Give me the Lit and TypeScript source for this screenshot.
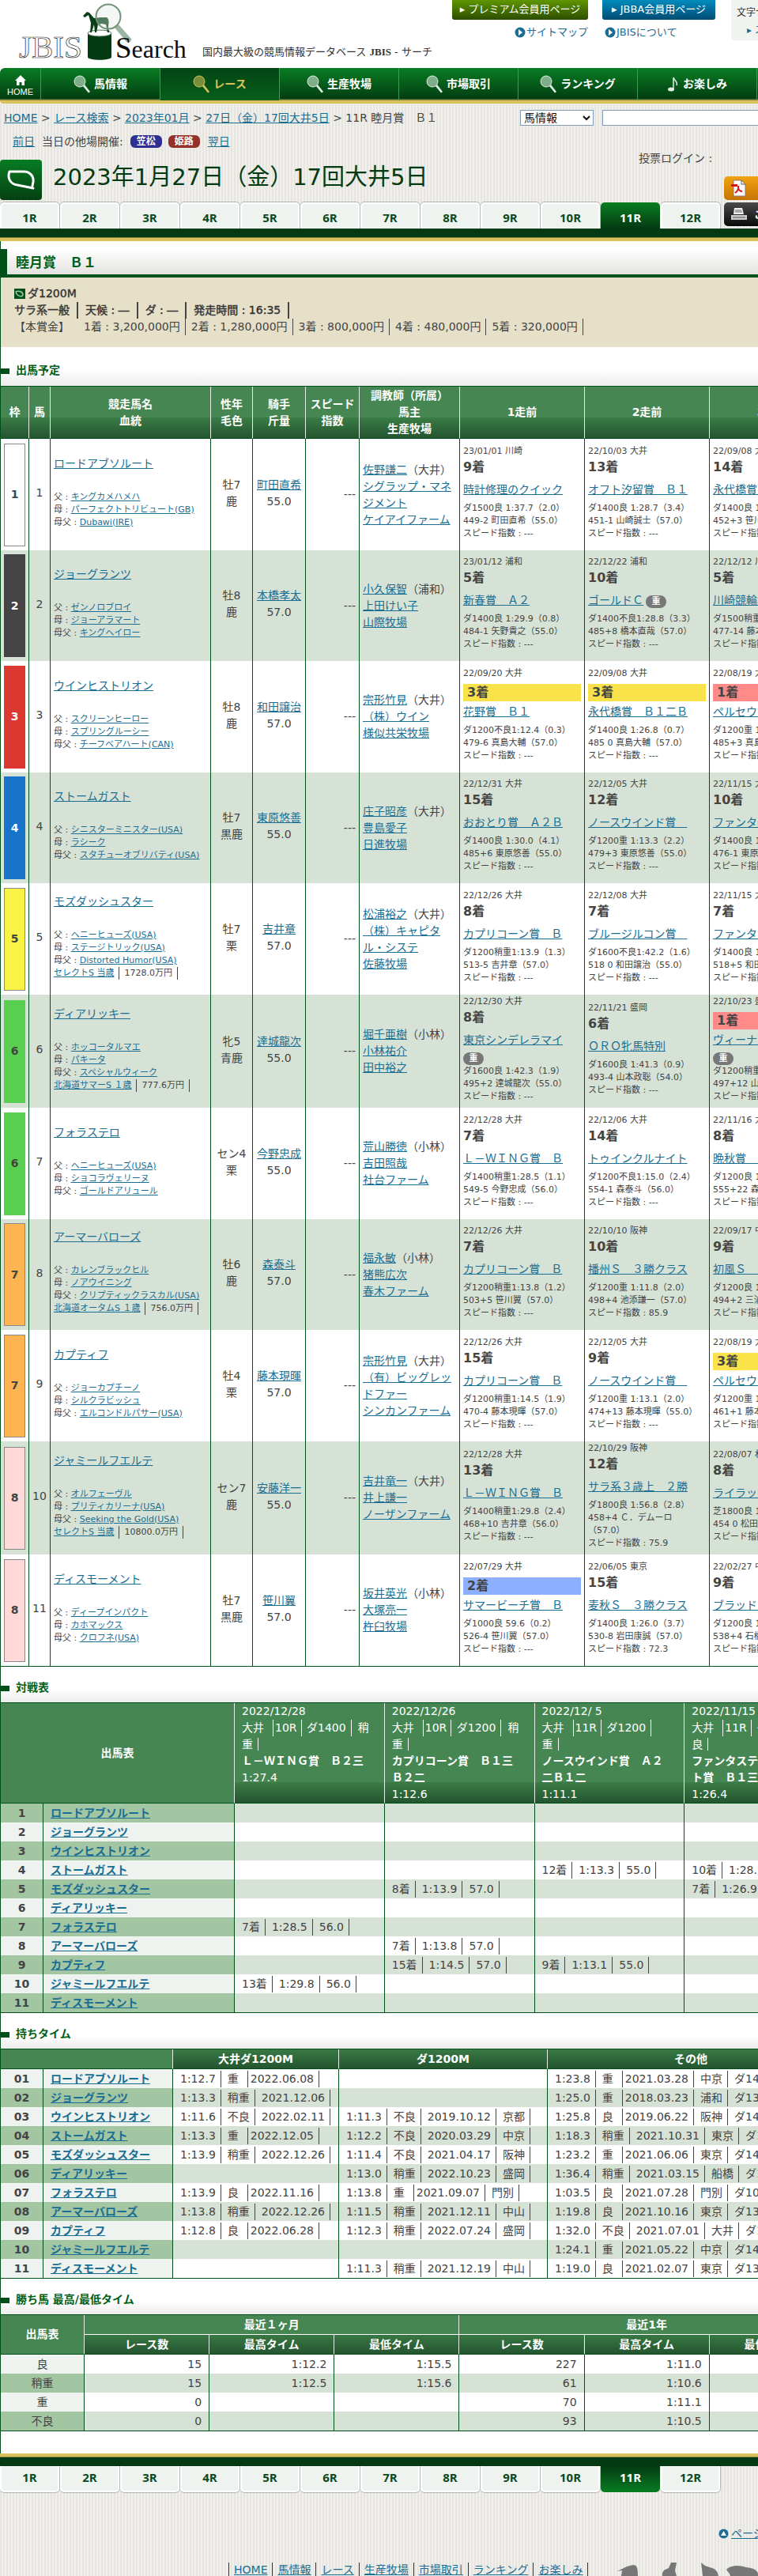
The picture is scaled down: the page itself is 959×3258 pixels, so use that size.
import { LitElement, html, css, svg, nothing } from "lit";
import { customElement, property } from "lit/decorators.js";
import { classMap } from "lit/directives/class-map.js";

type Run = { d: string; r: string; n: string; l: string[]; heavy?: "inline" | "below" };
type Horse = {
  w: number; name: string; sire: string; dam: string; bms: string; sale?: [string, string];
  sex: string; coat: string; jockey: string; kg: string; trainer: string; area: string;
  owner: string; farm: string; runs: Run[];
};

const run = (d: string, r: string, n: string, a: string, b: string, s = "---", heavy?: "inline" | "below"): Run =>
  ({ d, r, n, l: [a, b, `スピード指数 : ${s}`], heavy });

const HORSES: Horse[] = [
  { w: 1, name: "ロードアブソルート", sire: "キングカメハメハ", dam: "パーフェクトトリビュート(GB)", bms: "Dubawi(IRE)", sex: "牡7", coat: "鹿", jockey: "町田直希", kg: "55.0", trainer: "佐野謙二", area: "大井", owner: "シグラップ・マネジメント", farm: "ケイアイファーム",
    runs: [run("23/01/01 川崎", "9", "時計修理のクイック", "ダ1500良 1:37.7（2.0）", "449-2 町田直希（55.0）"), run("22/10/03 大井", "13", "オフト汐留賞　Ｂ１", "ダ1400良 1:28.7（3.4）", "451-1 山崎誠士（57.0）"), run("22/09/08 大井", "14", "永代橋賞　Ｂ１二Ｂ", "ダ1400良 1:28.9（2.8）", "452+3 笹川翼（57.0）")] },
  { w: 2, name: "ジョーグランツ", sire: "ゼンノロブロイ", dam: "ジョーアラマート", bms: "キングヘイロー", sex: "牡8", coat: "鹿", jockey: "本橋孝太", kg: "57.0", trainer: "小久保智", area: "浦和", owner: "上田けい子", farm: "山際牧場",
    runs: [run("23/01/12 浦和", "5", "新春賞　Ａ２", "ダ1400良 1:29.9（0.8）", "484-1 矢野貴之（55.0）"), run("22/12/22 浦和", "10", "ゴールドＣ", "ダ1400不良1:28.8（3.3）", "485+8 橋本直哉（57.0）", "---", "inline"), run("22/12/12 川崎", "5", "川崎競輪場賞", "ダ1500稍重1:37.0（1.2）", "477-14 藤本現暉（57.0）")] },
  { w: 3, name: "ウインヒストリオン", sire: "スクリーンヒーロー", dam: "スプリングルーシー", bms: "チーフベアハート(CAN)", sex: "牡8", coat: "鹿", jockey: "和田譲治", kg: "57.0", trainer: "宗形竹見", area: "大井", owner: "（株）ウイン", farm: "様似共栄牧場",
    runs: [run("22/09/20 大井", "3", "花野賞　Ｂ１", "ダ1200不良1:12.4（0.3）", "479-6 真島大輔（57.0）"), run("22/09/08 大井", "3", "永代橋賞　Ｂ１二Ｂ", "ダ1400良 1:26.8（0.7）", "485 0 真島大輔（57.0）"), run("22/08/19 大井", "1", "ペルセウス賞　Ｂ１", "ダ1200重 1:12.2（0.1）", "485+3 真島大輔（57.0）")] },
  { w: 4, name: "ストームガスト", sire: "シニスターミニスター(USA)", dam: "ラシーク", bms: "スタチューオブリバティ(USA)", sex: "牡7", coat: "黒鹿", jockey: "東原悠善", kg: "55.0", trainer: "庄子昭彦", area: "大井", owner: "豊島愛子", farm: "日進牧場",
    runs: [run("22/12/31 大井", "15", "おおとり賞　Ａ２Ｂ", "ダ1400良 1:30.0（4.1）", "485+6 東原悠善（55.0）"), run("22/12/05 大井", "12", "ノースウインド賞　", "ダ1200重 1:13.3（2.2）", "479+3 東原悠善（55.0）"), run("22/11/15 大井", "10", "ファンタスティック", "ダ1400良 1:28.1（1.7）", "476-1 東原悠善（55.0）")] },
  { w: 5, name: "モズダッシュスター", sire: "ヘニーヒューズ(USA)", dam: "ステージトリック(USA)", bms: "Distorted Humor(USA)", sale: ["セレクトS 当歳", "1728.0万円"], sex: "牡7", coat: "栗", jockey: "吉井章", kg: "57.0", trainer: "松浦裕之", area: "大井", owner: "（株）キャピタル・システ", farm: "佐藤牧場",
    runs: [run("22/12/26 大井", "8", "カプリコーン賞　Ｂ", "ダ1200稍重1:13.9（1.3）", "513-5 吉井章（57.0）"), run("22/12/08 大井", "7", "ブルージルコン賞　", "ダ1600不良1:42.2（1.6）", "518 0 和田譲治（55.0）"), run("22/11/15 大井", "7", "ファンタスティック", "ダ1400良 1:26.9（0.5）", "518+5 和田譲治（55.0）")] },
  { w: 6, name: "ディアリッキー", sire: "ホッコータルマエ", dam: "パキータ", bms: "スペシャルウィーク", sale: ["北海道サマーS １歳", "777.6万円"], sex: "牝5", coat: "青鹿", jockey: "達城龍次", kg: "55.0", trainer: "堀千亜樹", area: "小林", owner: "小林祐介", farm: "田中裕之",
    runs: [run("22/12/30 大井", "8", "東京シンデレラマイ", "ダ1600良 1:42.3（1.9）", "495+2 達城龍次（55.0）", "---", "below"), run("22/11/21 盛岡", "6", "ＯＲＯ牝馬特別", "ダ1600良 1:41.3（0.9）", "493-4 山本政聡（54.0）"), run("22/10/23 盛岡", "1", "ヴィーナススプリン", "ダ1200稍重1:13.0（0.1）", "497+12 山本聡哉（55.0）", "---", "below")] },
  { w: 6, name: "フォラステロ", sire: "ヘニーヒューズ(USA)", dam: "ショコラヴェリーヌ", bms: "ゴールドアリュール", sex: "セン4", coat: "栗", jockey: "今野忠成", kg: "55.0", trainer: "荒山勝徳", area: "小林", owner: "吉田照哉", farm: "社台ファーム",
    runs: [run("22/12/28 大井", "7", "Ｌ－ＷＩＮＧ賞　Ｂ", "ダ1400稍重1:28.5（1.1）", "549-5 今野忠成（56.0）"), run("22/12/06 大井", "14", "トゥインクルナイト", "ダ1200不良1:15.0（2.4）", "554-1 森泰斗（56.0）"), run("22/11/16 大井", "8", "晩秋賞　Ｂ１", "ダ1200良 1:13.9（1.4）", "555+22 森泰斗（56.0）")] },
  { w: 7, name: "アーマーバローズ", sire: "カレンブラックヒル", dam: "ノアウイニング", bms: "クリプティックラスカル(USA)", sale: ["北海道オータムS １歳", "756.0万円"], sex: "牡6", coat: "鹿", jockey: "森泰斗", kg: "57.0", trainer: "福永敏", area: "小林", owner: "猪熊広次", farm: "春木ファーム",
    runs: [run("22/12/26 大井", "7", "カプリコーン賞　Ｂ", "ダ1200稍重1:13.8（1.2）", "503+5 笹川翼（57.0）"), run("22/10/10 阪神", "10", "播州Ｓ　３勝クラス", "ダ1200重 1:11.8（2.0）", "498+4 池添謙一（57.0）", "85.9"), run("22/09/17 中山", "9", "初風Ｓ　３勝クラス", "ダ1200良 1:12.1（0.9）", "494+2 三浦皇成（57.0）")] },
  { w: 7, name: "カプティフ", sire: "ジョーカプチーノ", dam: "シルクラビッシュ", bms: "エルコンドルパサー(USA)", sex: "牡4", coat: "栗", jockey: "藤本現暉", kg: "57.0", trainer: "宗形竹見", area: "大井", owner: "（有）ビッグレッドファー", farm: "シンカンファーム",
    runs: [run("22/12/26 大井", "15", "カプリコーン賞　Ｂ", "ダ1200稍重1:14.5（1.9）", "470-4 藤本現暉（57.0）"), run("22/12/05 大井", "9", "ノースウインド賞　", "ダ1200重 1:13.1（2.0）", "474+13 藤本現暉（55.0）"), run("22/08/19 大井", "3", "ペルセウス賞　Ｂ１", "ダ1200重 1:12.4（0.2）", "461+1 藤本現暉（55.0）")] },
  { w: 8, name: "ジャミールフエルテ", sire: "オルフェーヴル", dam: "プリティカリーナ(USA)", bms: "Seeking the Gold(USA)", sale: ["セレクトS 当歳", "10800.0万円"], sex: "セン7", coat: "鹿", jockey: "安藤洋一", kg: "55.0", trainer: "吉井竜一", area: "大井", owner: "井上謙一", farm: "ノーザンファーム",
    runs: [run("22/12/28 大井", "13", "Ｌ－ＷＩＮＧ賞　Ｂ", "ダ1400稍重1:29.8（2.4）", "468+10 吉井章（56.0）"), run("22/10/29 阪神", "12", "サラ系３歳上　２勝", "ダ1800良 1:56.8（2.8）", "458+4 Ｃ．デムーロ（57.0）", "75.9"), run("22/08/07 札幌", "8", "ライラック賞　２勝", "芝1800良 1:50.0（1.1）", "454 0 松田大作（57.0）")] },
  { w: 8, name: "ディスモーメント", sire: "ディープインパクト", dam: "カホマックス", bms: "クロフネ(USA)", sex: "牡7", coat: "黒鹿", jockey: "笹川翼", kg: "57.0", trainer: "坂井英光", area: "小林", owner: "大塚亮一", farm: "杵臼牧場",
    runs: [run("22/07/29 大井", "2", "サマービーチ賞　Ｂ", "ダ1000良 59.6（0.2）", "526-4 笹川翼（57.0）"), run("22/06/05 東京", "15", "麦秋Ｓ　３勝クラス", "ダ1400良 1:26.0（3.7）", "530-8 岩田康誠（57.0）", "72.3"), run("22/02/27 中山", "9", "ブラッドストーンＳ", "ダ1200良 1:12.0（0.9）", "538+4 石橋脩（57.0）")] },
];

const VERSUS: Record<string, string[]> = {
  "4-2": ["12着", "1:13.3", "55.0"], "4-3": ["10着", "1:28.1", "55.0"],
  "5-1": ["8着", "1:13.9", "57.0"], "5-3": ["7着", "1:26.9", "55.0"],
  "7-0": ["7着", "1:28.5", "56.0"], "8-1": ["7着", "1:13.8", "57.0"],
  "9-1": ["15着", "1:14.5", "57.0"], "9-2": ["9着", "1:13.1", "55.0"],
  "10-0": ["13着", "1:29.8", "56.0"],
};

const TIMES = [
  ["1:12.7 重 2022.06.08", "", "1:23.8 重 2021.03.28 中京 ダ1400"],
  ["1:13.3 稍重 2021.12.06", "", "1:25.0 重 2018.03.23 浦和 ダ1300"],
  ["1:11.6 不良 2022.02.11", "1:11.3 不良 2019.10.12 京都", "1:25.8 良 2019.06.22 阪神 ダ1400"],
  ["1:13.3 重 2022.12.05", "1:12.2 不良 2020.03.29 中京", "1:18.3 稍重 2021.10.31 東京 ダ1300"],
  ["1:13.9 稍重 2022.12.26", "1:11.4 不良 2021.04.17 阪神", "1:23.2 重 2021.06.06 東京 ダ1400"],
  ["", "1:13.0 稍重 2022.10.23 盛岡", "1:36.4 稍重 2021.03.15 船橋 ダ1500"],
  ["1:13.9 良 2022.11.16", "1:13.8 重 2021.09.07 門別", "1:03.5 良 2021.07.28 門別 ダ1000"],
  ["1:13.8 稍重 2022.12.26", "1:11.5 稍重 2021.12.11 中山", "1:19.8 良 2021.10.16 東京 ダ1300"],
  ["1:12.8 良 2022.06.28", "1:12.3 稍重 2022.07.24 盛岡", "1:32.0 不良 2021.07.01 大井 ダ1400"],
  ["", "", "1:24.1 重 2021.05.22 中京 ダ1400"],
  ["", "1:11.3 稍重 2021.12.19 中山", "1:19.0 良 2021.02.07 東京 ダ1300"],
];

const RECORDS = [
  ["良", "15", "1:12.2", "1:15.5", "227", "1:11.0", "1:15.9"],
  ["稍重", "15", "1:12.5", "1:15.6", "61", "1:10.6", "1:15.6"],
  ["重", "0", "", "", "70", "1:11.1", "1:15.4"],
  ["不良", "0", "", "", "93", "1:10.5", "1:15.3"],
];

const base = css`
  * { box-sizing: border-box; }
  a { color: #1a6e93; text-decoration: underline; }
  h1, h2, h3, p, ul { margin: 0; padding: 0; }
  ul { list-style: none; }
  .seps span { display: inline-block; line-height: 21px; padding-right: 6px; margin-right: 8px; border-right: 1px solid #444; }
  .seps .short { padding-right: 11px; margin-right: 3px; }
`;

const gridStyles = css`
  table { width: 100%; table-layout: fixed; border-collapse: separate; border-spacing: 0; border-top: 1px solid #00501a; border-bottom: 1px solid #00501a; }
  th { font-weight: 700; }
  thead th { color: #fff; background: #468653 linear-gradient(#3a7c46, #24552f) bottom / 100% 26px no-repeat; border-bottom: 1px solid #00501a; padding: 1px 4px; line-height: 21px; }
  thead th + th, thead .sub th { border-left: 1px solid #e4ede5; }
  thead .flat { background: #468653; }
  tbody td, tbody th { border-left: 1px solid #00501a; }
  tbody tr > :first-child { border-left: 0; }
`;

const seps = (parts: string[]) =>
  html`<span class="seps">${parts.map((p) => html`<span class=${p.length === 1 ? "short" : ""}>${p}</span>`)}</span>`;

const lens = svg`<circle cx="8" cy="8" r="7" fill="currentColor" fill-opacity=".55" stroke="currentColor" stroke-width="1"/><path d="M12 14l2-2 7 9-2 1.500z" fill="currentColor"/>`;

@customElement("site-header")
class SiteHeader extends LitElement {
  static styles = [base, css`
    :host { display: block; background: #fff; }
    .top { display: flex; height: 86px; }
    .logo { display: flex; flex: none; width: 250px; }
    .tag { flex: 1; align-self: flex-end; font-size: 13px; line-height: 20px; margin-bottom: 10px; padding-left: 6px; color: #333; white-space: nowrap; }
    .tag b { font-family: "Liberation Serif", serif; }
    .links { display: grid; grid-template-columns: 172px 143px; column-gap: 18px; align-content: start; justify-items: start; margin-right: 20px; }
    .links a { text-decoration: none; font-size: 13px; }
    .links .member { width: 100%; height: 25px; line-height: 23px; color: #fff; text-align: center; border-radius: 0 0 3px 3px; background: linear-gradient(#5f9600, #2c4d00); }
    .links .jbba { background: linear-gradient(#008bbd, #004c73); }
    .links .sub { display: flex; align-items: center; gap: 1px; line-height: 20px; margin-top: 6px; }
    .map { justify-self: end; }
    .jabout { margin-left: 3px; }
    .size { width: 130px; height: 51px; background: #f1f3f1; padding: 5px 7px; font-size: 12px; line-height: 22px; color: #333; border-radius: 0 0 0 4px; white-space: nowrap; }
    .size a { text-decoration: none; margin-left: 13px; }
    nav { display: flex; height: 45px; border-bottom: 4px solid #d9c25b; border-radius: 6px 0 0 4px; background: linear-gradient(#087d23, #043d12 39px, #8b8a3a 40px); overflow: hidden; }
    nav a { width: 151px; display: flex; align-items: center; justify-content: center; gap: 4px; color: #fff; font-size: 14px; font-weight: 700; text-decoration: none; border-right: 1px solid #3f9a52; }
    nav svg { color: #e3eee5; }
    nav .home { width: 52px; flex-direction: column; gap: 1px; font: 11px/12px "Liberation Sans", sans-serif; padding-top: 4px; }
    nav .on { color: #d9c25b; background: linear-gradient(#034414, #075f1c); }
    nav .on svg { color: #d9c25b; }
  `];
  render() {
    const tabs = ["馬情報", "レース", "生産牧場", "市場取引", "ランキング"];
    return html`
      <div class="top">
        <a class="logo" href="#" aria-label="JBIS Search">
          <svg width="250" height="86" viewBox="0 0 250 86">
            <text x="24" y="73" font-family="Liberation Serif" font-size="41" fill="#fff" stroke="#222" stroke-width=".7">JBIS</text>
            <path d="M111 42v30c0 5 30 5 30 0V42z" fill="#043a12"/>
            <ellipse cx="126" cy="42" rx="15" ry="4" fill="#fff" stroke="#4d7359"/>
            <path d="M105 20l5-5 3 1 6 7 8-1h8c3 2 3 6 2 12l1 7h-2l-2-10-5-1-5 1-2 10h-2l-1-10-3 10h-2l1-12-3-10-5 3z" fill="#0a3f18"/>
            <path d="M145 35l5-4 16 18c1 4-4 6-6 4z" fill="#9bb5a2"/>
            <circle cx="137" cy="21" r="15.500" fill="#dfe9e1" fill-opacity=".35" stroke="#6f9479" stroke-width="2"/>
            <text x="146" y="73" font-family="Liberation Serif" font-size="37" fill="#0c0c0c"><tspan>S</tspan><tspan font-size="32">earch</tspan></text>
          </svg>
        </a>
        <p class="tag">国内最大級の競馬情報データベース <b>JBIS</b> - サーチ</p>
        <div class="links">
          <a class="member" href="#">▸ プレミアム会員用ページ</a>
          <a class="member jbba" href="#">▸ JBBA会員用ページ</a>
          <a class="sub map" href="#">${this.dot()}サイトマップ</a>
          <a class="sub jabout" href="#">${this.dot()}JBISについて</a>
        </div>
        <div class="size">文字サイズ<br /><a href="#">▸ スマートフォン</a></div>
      </div>
      <nav>
        <a class="home" href="#"><svg width="16" height="14" viewBox="0 0 16 14"><path d="M8 0l7 7h-2v6H9.500V9h-3v4H3V7H1z" fill="#fff"/></svg>HOME</a>
        ${tabs.map((t, i) => html`<a href="#" class=${i === 1 ? "on" : ""}><svg width="22" height="24" viewBox="0 0 22 24">${lens}</svg>${t}</a>`)}
        <a href="#"><svg width="16" height="20" viewBox="0 0 16 20"><path d="M8 16V1c1 4 6 5 4 10" fill="none" stroke="currentColor" stroke-width="1.500"/><ellipse cx="5" cy="16" rx="4" ry="2.500" fill="currentColor"/></svg>お楽しみ</a>
      </nav>`;
  }
  dot() {
    return html`<svg width="14" height="14" viewBox="0 0 14 14"><circle cx="7" cy="7" r="6.500" fill="#1a6e93"/><path d="M5 3l5 4-5 4z" fill="#fff"/></svg>`;
  }
}

@customElement("race-tabs")
class RaceTabs extends LitElement {
  @property({ type: Boolean }) bottom = false;
  static styles = [base, css`
    :host { display: block; }
    ul { display: flex; width: 912px; }
    li { flex: 1; }
    a { display: block; height: 33px; margin-right: 1px; text-align: center; text-decoration: none; font: 700 15px/34px "Open Sans", sans-serif; color: #0a4a1c; background: #eff3ef; border: 2px solid #fff; border-bottom: 0; border-radius: 5px 5px 0 0; box-shadow: 0 -1px 1px #b5b5b0, 1px 0 1px #b5b5b0; }
    .on { color: #fff; border-color: transparent; background: linear-gradient(#087d23, #043a12) border-box; box-shadow: none; }
    .down a { line-height: 28px; border-bottom: 2px solid #fff; border-top: 0; border-radius: 0 0 5px 5px; box-shadow: 0 1px 1px #b5b5b0, 1px 0 1px #b5b5b0; }
    .down .on { border-color: transparent; background: linear-gradient(#043a12, #087d23) border-box; box-shadow: none; }
  `];
  render() {
    return html`<ul class=${this.bottom ? "down" : ""}>${Array.from({ length: 12 }, (_, i) =>
      html`<li><a href="#" class=${i === 10 ? "on" : ""}>${i + 1}R</a></li>`)}</ul>`;
  }
}

@customElement("entry-table")
class EntryTable extends LitElement {
  static styles = [base, gridStyles, css`
    :host { display: block; }
    .c1 { width: 35px; } .c2 { width: 27px; } .c3 { width: 203px; } .c4 { width: 53px; } .c5 { width: 67px; } .c6 { width: 68px; } .c7 { width: 127px; }
    tbody tr { height: 141px; }
    tbody tr:nth-child(even) { height: 140px; background: #d7e2d6; }
    tbody tr.tall { height: 143px; }
    td { padding: 0 4px; line-height: 21px; vertical-align: middle; }
    .box { display: flex; align-items: center; justify-content: center; width: 27px; height: 130px; font-weight: 700; }
    .w1 { background: #fff; border: 1px solid #888; }
    .w2 { background: #444; color: #fff; }
    .w3 { background: #dc3832; color: #fff; }
    .w4 { background: #1874cb; color: #fff; }
    .w5 { background: #f8f344; border: 1px solid #888; }
    .w6 { background: #58cf4f; }
    .w7 { background: #ffb452; border: 1px solid #888; }
    .w8 { background: #ffd9d8; border: 1px solid #888; }
    .num { text-align: right; }
    .mid { text-align: center; padding: 0 0 4px; }
    .pair { padding-bottom: 7px; }
    .blood { font-size: 11px; line-height: 16px; margin-top: 24px; white-space: nowrap; }
    .blood .seps span { line-height: 16px; padding-right: 6px; margin-right: 6px; }
    .run { font-size: 11px; line-height: 16px; padding-bottom: 6px; }
    .rank { font-size: 16px; line-height: 22px; font-weight: 700; margin: 1px 0 7px; }
    .r1, .r2, .r3 { padding-left: 5px; margin: 5px 0 3px; }
    .r1 { background: #ff8a88; } .r2 { background: #8cb0ff; } .r3 { background: #f9e24a; }
    .race { height: 21px; font-size: 14px; line-height: 21px; margin-bottom: 5px; white-space: nowrap; }
    .heavy { display: inline-block; width: 26px; height: 16px; border-radius: 8px; background: #777; color: #fff; font-size: 11px; font-weight: 700; line-height: 16px; text-align: center; vertical-align: middle; }
    .race .heavy { margin: 2px 0 0 3px; }
    .below { display: flex; }
    .keep { white-space: nowrap; }
  `];
  cell(r: Run) {
    return html`<td class="run">
      <p>${r.d}</p>
      <p class="rank r${r.r}">${r.r}着</p>
      <p class="race"><a href="#">${r.n}</a>${r.heavy === "inline" ? html`<span class="heavy">重</span>` : nothing}</p>
      ${r.heavy === "below" ? html`<p class="below"><span class="heavy">重</span></p>` : nothing}
      ${r.l.map((t) => html`<p>${t}</p>`)}
    </td>`;
  }
  render() {
    return html`<table>
      <colgroup>${[1, 2, 3, 4, 5, 6, 7].map((n) => html`<col class="c${n}" />`)}<col /><col /><col /></colgroup>
      <thead><tr>
        <th>枠</th><th>馬</th><th>競走馬名<br />血統</th><th>性年<br />毛色</th><th>騎手<br />斤量</th>
        <th class="keep">スピード<br />指数</th><th class="keep">調教師（所属）<br />馬主<br />生産牧場</th><th>1走前</th><th>2走前</th><th>3走前</th>
      </tr></thead>
      <tbody>${HORSES.map((h, i) => html`<tr class=${classMap({ tall: i === 5 || i === 9 })}>
        <td><div class="box w${h.w}">${h.w}</div></td>
        <td class="mid">${i + 1}</td>
        <td class="pair"><a href="#">${h.name}</a>
          <div class="blood">
            <p>父 : <a href="#">${h.sire}</a></p><p>母 : <a href="#">${h.dam}</a></p><p>母父 : <a href="#">${h.bms}</a></p>
            ${h.sale ? html`<p class="seps"><span><a href="#">${h.sale[0]}</a></span><span>${h.sale[1]}</span></p>` : nothing}
          </div></td>
        <td class="mid">${h.sex}<br />${h.coat}</td>
        <td class="mid"><a href="#">${h.jockey}</a><br />${h.kg}</td>
        <td class="num">---</td>
        <td><a href="#">${h.trainer}</a>（${h.area}）<br /><a href="#">${h.owner}</a><br /><a href="#">${h.farm}</a></td>
        ${h.runs.map((r) => this.cell(r))}
      </tr>`)}</tbody>
    </table>`;
  }
}

@customElement("versus-table")
class VersusTable extends LitElement {
  static styles = [base, gridStyles, css`
    :host { display: block; }
    .n { width: 53px; } .h { width: 242px; }
    thead th { text-align: left; vertical-align: top; padding: 0 9px; font-weight: 400; }
    thead .flat { text-align: center; vertical-align: middle; font-weight: 700; }
    thead .seps span { border-color: #fff; }
    thead .seps .tight { margin-right: 2px; padding-right: 5px; }
    thead .seps .place { padding-right: 11px; margin-right: 2px; }
    thead .seps .ground { display: inline; padding-right: 6px; }
    tbody td, tbody th { height: 24px; padding: 0 9px; line-height: 22px; white-space: nowrap; }
    tbody th { background: #eff3ef; text-align: left; }
    tbody th:first-child { text-align: center; }
    tbody tr:nth-child(odd) td { background: #d7e2d6; }
    tbody tr:nth-child(odd) th { background: #a2c5a2; }
  `];
  render() {
    const heads: [string, string, string, string, unknown, string][] = [
      ["2022/12/28", "10R", "ダ1400", "稍重", "Ｌ－ＷＩＮＧ賞　Ｂ２三", "1:27.4"],
      ["2022/12/26", "10R", "ダ1200", "稍重", html`カプリコーン賞　Ｂ１三<br />Ｂ２二`, "1:12.6"],
      ["2022/12/ 5", "11R", "ダ1200", "重", html`ノースウインド賞　Ａ２<br />二Ｂ１二`, "1:11.1"],
      ["2022/11/15", "11R", "ダ1400", "良", html`ファンタスティックナイ<br />ト賞　Ｂ１三`, "1:26.4"],
    ];
    return html`<table>
      <colgroup><col class="n" /><col class="h" /><col /><col /><col /><col /></colgroup>
      <thead><tr><th class="flat" colspan="2">出馬表</th>
        ${heads.map(([d, r, m, g, n, t]) => html`<th>${d}<br /><span class="seps"><span class="place">大井</span><span class="tight">${r}</span> <span class="dist">${m}</span><span class="ground">${g}</span></span><br /><b>${n}</b><br />${t}</th>`)}
      </tr></thead>
      <tbody>${HORSES.map((h, i) => html`<tr><th>${i + 1}</th><th><a href="#">${h.name}</a></th>
        ${[0, 1, 2, 3].map((c) => html`<td>${seps(VERSUS[`${i + 1}-${c}`] ?? [])}</td>`)}</tr>`)}</tbody>
    </table>`;
  }
}

@customElement("time-table")
class TimeTable extends LitElement {
  static styles = [base, gridStyles, css`
    :host { display: block; }
    .n { width: 53px; } .h { width: 164px; } .a { width: 210px; } .b { width: 264px; }
    thead th { padding: 2px 4px 1px; }
    tbody td, tbody th { height: 24px; padding: 0 9px; line-height: 22px; white-space: nowrap; }
    tbody th { background: #eff3ef; text-align: left; }
    tbody th:first-child { text-align: center; }
    tbody tr:nth-child(even) td { background: #d7e2d6; }
    tbody tr:nth-child(even) th { background: #a2c5a2; }
  `];
  render() {
    return html`<table>
      <colgroup><col class="n" /><col class="h" /><col class="a" /><col class="b" /><col /></colgroup>
      <thead><tr><th class="flat" colspan="2"></th><th>大井ダ1200M</th><th>ダ1200M</th><th>その他</th></tr></thead>
      <tbody>${HORSES.map((h, i) => html`<tr><th>${String(i + 1).padStart(2, "0")}</th><th><a href="#">${h.name}</a></th>
        ${TIMES[i].map((t) => html`<td>${t ? seps(t.split(" ")) : nothing}</td>`)}</tr>`)}</tbody>
    </table>`;
  }
}

@customElement("record-table")
class RecordTable extends LitElement {
  static styles = [base, gridStyles, css`
    :host { display: block; }
    .n { width: 105px; }
    thead th { height: 25px; }
    thead .group { border-bottom: 1px solid #fff; }
    tbody td, tbody th { height: 24px; padding: 0 9px; text-align: right; }
    tbody th { background: #eff3ef; text-align: center; font-weight: 400; }
    tbody tr:nth-child(even) td { background: #d7e2d6; }
    tbody tr:nth-child(even) th { background: #a2c5a2; }
  `];
  render() {
    return html`<table>
      <colgroup><col class="n" /><col /><col /><col /><col /><col /><col /></colgroup>
      <thead>
        <tr><th class="flat" rowspan="2">出馬表</th><th class="flat group" colspan="3">最近１ヶ月</th><th class="flat group" colspan="3">最近1年</th></tr>
        <tr class="sub">${[0, 1].map(() => html`<th>レース数</th><th>最高タイム</th><th>最低タイム</th>`)}</tr>
      </thead>
      <tbody>${RECORDS.map(([g, ...v]) => html`<tr><th>${g}</th>${v.map((x) => html`<td>${x}</td>`)}</tr>`)}</tbody>
    </table>`;
  }
}

@customElement("app-root")
class AppRoot extends LitElement {
  static styles = [base, css`
    :host { display: block; overflow: hidden; font: 14px/21px "DejaVu Sans", "Noto Sans CJK JP", sans-serif; color: #444; text-spacing-trim: space-all; background: repeating-linear-gradient(90deg, #e6e5df 0 2px, #f0efeb 2px 4px); }
    .page { min-width: 1055px; }
    .crumbs { display: flex; height: 35px; padding: 8px 0 0 5px; }
    .crumbs nav { width: 653px; line-height: 20px; }
    select, input { height: 20px; border: 1px solid #7f9db9; background: #fff; font: inherit; line-height: 18px; color: #111; padding: 0; border-radius: 0; }
    select { width: 93px; margin-right: 11px; }
    input { width: 200px; }
    .days { display: flex; align-items: center; gap: 9px; height: 26px; padding-left: 16px; }
    .badge { width: 40px; height: 16px; line-height: 16px; border-radius: 6px; text-align: center; color: #fff; font-size: 12px; font-weight: 700; text-decoration: none; background: #2e2f92; }
    .himeji { background: #923228; margin: 0 1px 0 -1px; }
    .login { padding-left: 808px; line-height: 16px; height: 10px; }
    .title { display: flex; height: 51px; }
    .mark { width: 53px; height: 51px; border-radius: 4px; background: linear-gradient(#087d23, #044012); }
    h1 { width: 863px; padding-left: 14px; font-size: 29px; line-height: 44px; font-weight: 400; color: #043a12; white-space: nowrap; }
    .tool { display: flex; align-items: center; gap: 8px; width: 139px; height: 30px; padding: 0 0 0 8px; border: 0; border-radius: 5px; color: #fff; font: inherit; font-size: 13px; font-weight: 700; white-space: nowrap; background: linear-gradient(#f0a313, #c67300); }
    .tool svg { flex: none; }
    .title .tool { margin-top: 21px; gap: 18px; }
    .print { background: linear-gradient(#4a4a4a, #0a0a0a); }
    .tabrow { display: flex; gap: 4px; height: 36px; padding-top: 3px; }
    .tabrow .tool { flex: none; }
    .bar { height: 16px; background: linear-gradient(#043a12 11px, #7d8a3a 11px 12px, #d9c25b 12px); }
    .flip { transform: scaleY(-1); }
    main { background: #fff; border-left: 1px solid #00501a; padding-bottom: 28px; }
    .lead { padding-top: 10px; }
    h2 { height: 36px; border-left: 8px solid #00501a; border-bottom: 4px solid #00501a; padding-left: 11px; font-size: 17px; line-height: 34px; color: #00601a; background: linear-gradient(#fff, #e3e2df); }
    .info { background: #e6e0c9; padding: 10px 17px 15px; }
    .info p { display: flex; align-items: center; height: 21px; line-height: 21px; }
    .strong { font-weight: 400; color: #333; -webkit-text-stroke: .4px; }
    .info .strong span { border-right: 2px solid #444; padding-right: 9px; margin-right: 9px; }
    .info .prize span { border-right: 1px solid #444; padding-right: 6px; margin-right: 7px; }
    .info .prize b { font-weight: 400; width: 88px; }
    h3 { display: flex; align-items: center; gap: 8px; height: 45px; padding-top: 6px; font-size: 14px; line-height: 20px; color: #00601a; background: linear-gradient(#fff 28px, #ececec); }
    h3::before { content: ""; width: 11px; height: 7px; margin-top: 4px; background: #00501a; }
    .info + h3 { height: 49px; padding-top: 8px; }
    .ptop { display: flex; align-items: center; gap: 3px; padding: 42px 0 0 909px; }
    .foot { display: flex; margin-top: 26px; padding-left: 289px; height: 17px; overflow: hidden; }
    .foot nav { display: flex; width: 491px; line-height: 18px; border-left: 1px solid #333; white-space: nowrap; }
    .foot nav a { margin: 0 0 0 6px; }
    .foot nav span { border-right: 1px solid #333; padding-right: 6px; }
    .foot svg { flex: none; }
  `];
  render() {
    const prizes = ["1着 : 3,200,000円", "2着 : 1,280,000円", "3着 : 800,000円", "4着 : 480,000円", "5着 : 320,000円"];
    return html`<div class="page">
      <site-header></site-header>
      <div class="crumbs">
        <nav><a href="#">HOME</a> &gt; <a href="#">レース検索</a> &gt; <a href="#">2023年01月</a> &gt; <a href="#">27日（金）17回大井5日</a> &gt; 11R 睦月賞　Ｂ１</nav>
        <select aria-label="検索対象"><option>馬情報</option></select><input type="text" aria-label="キーワード" />
      </div>
      <div class="days"><a href="#">前日</a><span>当日の他場開催:</span><a class="badge" href="#">笠松</a><a class="badge himeji" href="#">姫路</a><a href="#">翌日</a></div>
      <p class="login">投票ログイン :</p>
      <div class="title">
        <svg class="mark" viewBox="0 0 53 51"><path d="M12 15L30 15C38 15 43 21 42 28L41 33M12 15C9 23 13 31 22 32L42 36" fill="none" stroke="#fff" stroke-width="3" stroke-linecap="round" stroke-linejoin="round"/></svg>
        <h1>2023年1月27日（金）17回大井5日</h1>
        <button class="tool"><svg width="22" height="22" viewBox="0 0 22 22"><path d="M4 1h10l5 5v15H4z" fill="#fff" stroke="#8a7a60"/><path d="M14 1v5h5" fill="none" stroke="#555"/><path d="M1 6h8v3H1z" fill="#d11"/><path d="M10 8c1 5-1 7-4 9M10 11c1 3 3 4 5 4" stroke="#d11" stroke-width="2" fill="none"/></svg>PDF出馬表</button>
      </div>
      <div class="tabrow"><race-tabs></race-tabs>
        <button class="tool print"><svg width="22" height="18" viewBox="0 0 22 18"><path d="M5 1h10l2 8H4z" fill="#eee"/><path d="M6 4h8M6 6h9" stroke="#666"/><path d="M1 10h20v6H1z" fill="#ccc"/><path d="M3 13h16" stroke="#555"/></svg>このページを印刷</button>
      </div>
      <div class="bar"></div>
      <main>
        <div class="lead"><h2>睦月賞　Ｂ１</h2></div>
        <div class="info">
          <p class="strong"><svg width="17" height="13" viewBox="0 0 17 13"><path d="M0 0h14v13H0z" fill="#00501a"/><path d="M2 4c4-2 9 0 9 4-1 3-8 2-9-4z" fill="none" stroke="#9cc8a5" stroke-width="1.500"/></svg>ダ1200M</p>
          <p class="strong"><span>サラ系一般</span><span>天候 : ―</span><span>ダ : ―</span><span>発走時間 : 16:35</span></p>
          <p class="prize"><b>【本賞金】</b>${prizes.map((p) => html`<span>${p}</span>`)}</p>
        </div>
        <h3>出馬予定</h3><entry-table></entry-table>
        <h3>対戦表</h3><versus-table></versus-table>
        <h3>持ちタイム</h3><time-table></time-table>
        <h3>勝ち馬 最高/最低タイム</h3><record-table></record-table>
      </main>
      <div class="bar flip"></div>
      <race-tabs bottom></race-tabs>
      <p class="ptop"><svg width="13" height="13" viewBox="0 0 13 13"><circle cx="6.500" cy="6.500" r="6" fill="#1a6e93"/><path d="M3 9l3.500-6L10 9z" fill="#fff"/></svg><a href="#">ページの先頭へ</a></p>
      <div class="foot">
        <nav>${["HOME", "馬情報", "レース", "生産牧場", "市場取引", "ランキング", "お楽しみ"].map((t) => html`<span><a href="#">${t}</a></span>`)}</nav>
        <svg width="260" height="17" viewBox="0 0 260 17" fill="#777"><path d="M0 11l3-1 8-4 2-1 8-2c5 0 6 4 6 14H6l1-7zM58 17c-1-5 2-8 8-10l3-7h7l-2 10 2 7zM107 0l5 4 9 3c6 2 7 6 8 10h-20zM139 9c5-6 17-6 25-3 12 1 15 5 16 11h-36c-1-4-3-5-5-8z"/></svg>
      </div>
    </div>`;
  }
}
